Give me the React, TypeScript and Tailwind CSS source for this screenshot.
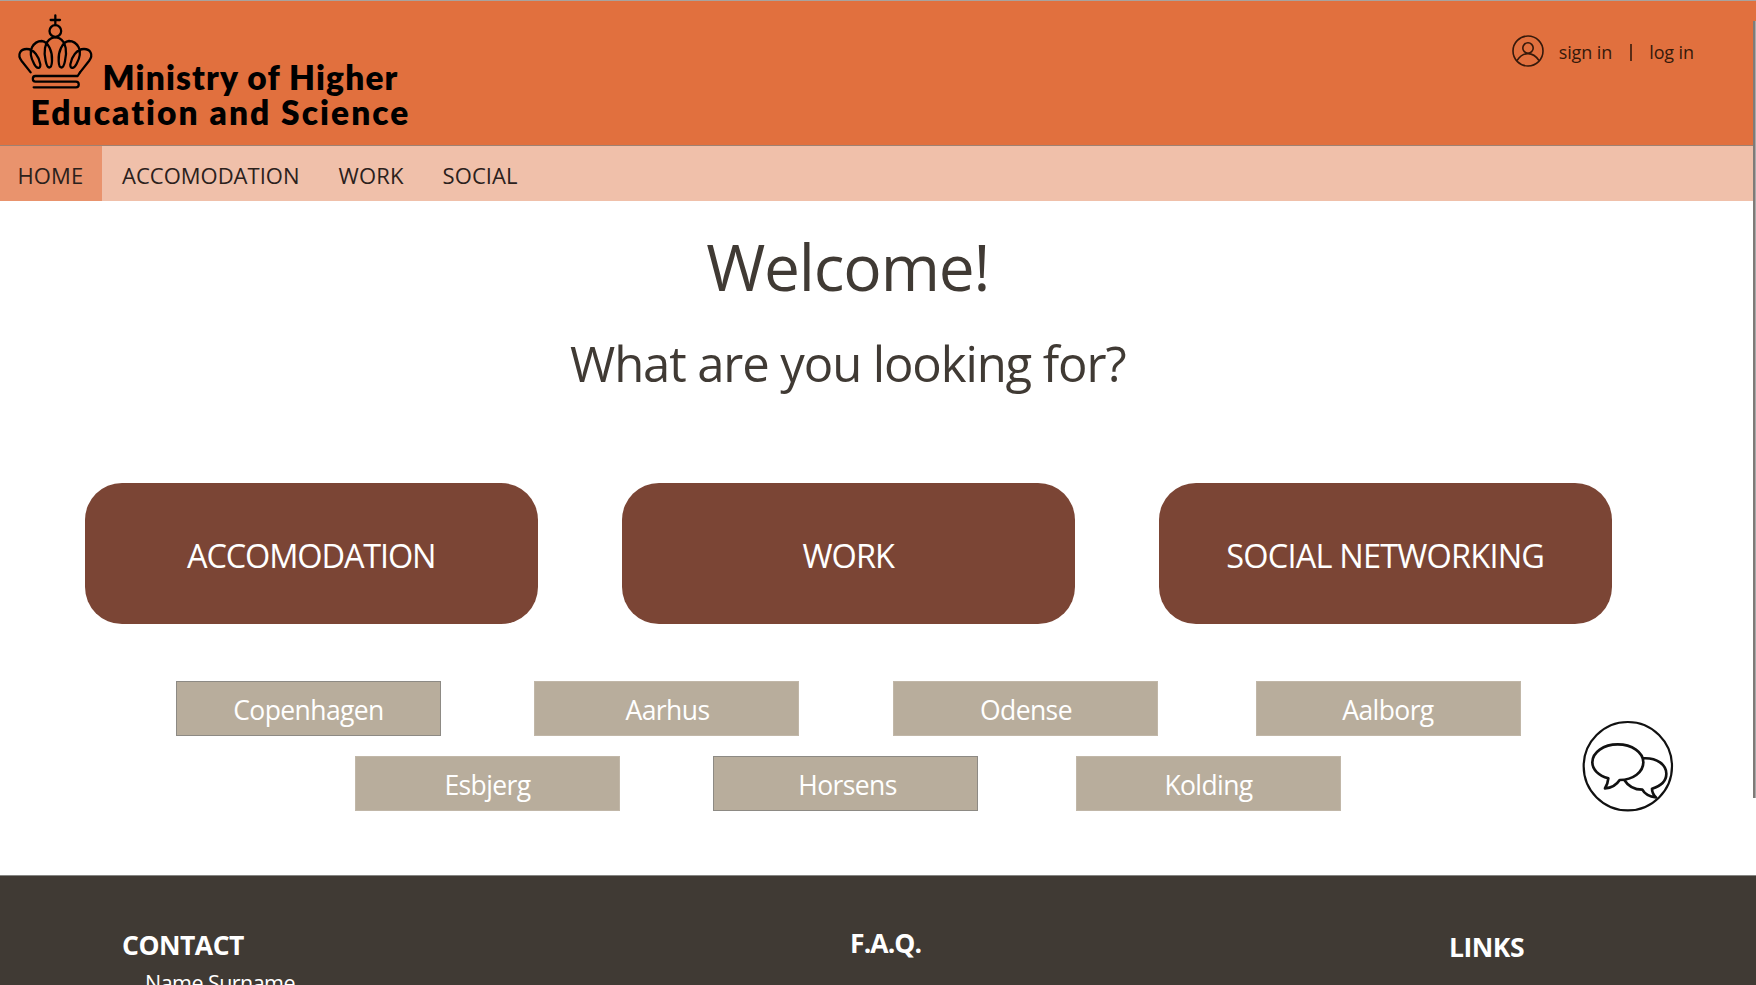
const navItems = [
  { label: 'HOME', box: 'w-[102px] pl-[17.500px] tracking-[0.1px] bg-[#e9936d]' },
  { label: 'ACCOMODATION', box: 'w-[215px] pl-[20px]' },
  { label: 'WORK', box: 'w-[104px] pl-[21.500px] tracking-[0.2px]' },
  { label: 'SOCIAL', box: 'pl-[21.500px] tracking-[0.1px]' },
];

const categories = [
  { label: 'ACCOMODATION', tracking: 'tracking-[-1.150px]' },
  { label: 'WORK', tracking: 'tracking-[-0.9px]' },
  { label: 'SOCIAL NETWORKING', tracking: 'tracking-[-0.8px]' },
];

function CrownIcon() {
  const half =
    'M62 202 L35 168 C20 148 32 132 50 132 C72 132 88 157 91 178 C92 193 80 192 72 176 C62 158 60 140 66 127 C74 112 86 108 95 108 C116 110 128 142 126 168 C125 194 112 194 107 168 C101 143 102 112 124 100 Q130 97 136 97';
  return (
    <svg className="h-[85px] w-[90px] shrink-0" viewBox="0 0 270 255" fill="none" stroke="#000" strokeWidth="6.8" strokeLinecap="round" strokeLinejoin="round">
      <path d="M136 31V60M122 45H150" />
      <circle cx="136" cy="78" r="17.5" />
      <path d={half} />
      <path d={half} transform="translate(272 0) scale(-1 1)" />
      <path d="M210 202L203 213H76C66 213 66 230 76 230H198C209 230 209 247 198 247H71" />
    </svg>
  );
}

function UserIcon() {
  return (
    <svg className="size-8 shrink-0" viewBox="0 0 32 32" fill="none" stroke="#35190b" strokeWidth="1.6">
      <circle cx="16" cy="16" r="15" />
      <circle cx="16" cy="13" r="5.2" />
      <path d="M5 25.5C8 21 12 18.6 16 18.6S24 21 27 25.5" />
    </svg>
  );
}

function ChatIcon() {
  return (
    <svg className="h-[92px] w-[92px]" viewBox="36 28 276 276" fill="#fff" stroke="#111" strokeWidth="8" strokeLinejoin="round">
      <circle cx="173.500" cy="166.500" r="132.500" strokeWidth="6.5" />
      <path d="M218 143C262 140 289 163 289 189C289 210 272 226 246 234C246 243 250 252 258 260C240 258 224 250 217 237C195 237 174 226 163 208" />
      <path d="M143 101C186 101 220 125 220 155C220 184 190 208 149 208C140 222 124 232 105 233C111 224 114 213 115 203C86 195 67 177 67 155C67 125 101 101 143 101Z" />
    </svg>
  );
}

function City({ name, className = 'border-[#c1b7a8]' }: { name: string; className?: string }) {
  return (
    <button
      className={
        'flex h-[55px] w-[265px] items-center justify-center border pt-[4px] text-[26.500px] leading-none tracking-[-0.6px] text-white bg-[#b8ad9c] ' +
        className
      }
    >
      {name}
    </button>
  );
}

export default function App() {
  return (
    <div className="relative flex h-[985px] w-[1756px] flex-col overflow-hidden bg-white font-['Open_Sans','Noto_Sans',sans-serif]">
      <header className="flex h-[146px] shrink-0 justify-between border-y border-t-[#a8a39f] border-b-[#a08171] bg-[#e1703e]">
        <div className="pt-1 font-['Lato',sans-serif] text-[33.500px] font-extrabold leading-[35px] text-black">
          <div className="flex h-[90px] items-end pl-[10px]">
            <div className="self-start">
              <CrownIcon />
            </div>
            <span className="pl-[2.500px] tracking-[1.150px]">Ministry of Higher</span>
          </div>
          <div className="pl-[30.500px] tracking-[2.050px]">Education and Science</div>
        </div>
        <div className="mr-[62px] mt-[34px] flex h-8 items-center text-[18px] leading-none tracking-[-0.1px] text-[#35190b]">
          <UserIcon />
          <a className="pl-[15px] pt-[2px]">sign in</a>
          <span className="mx-[17.500px] mt-[3px] h-[17px] w-[2px] bg-[#5a2c16]" />
          <a className="pt-[2px]">log in</a>
        </div>
      </header>

      <nav className="flex h-[55px] shrink-0 bg-[#f0c0aa] text-[22px] leading-none text-[#2b211c]">
        {navItems.map((n) => (
          <a key={n.label} className={'flex h-full items-center pt-[2px] ' + n.box}>
            {n.label}
          </a>
        ))}
      </nav>

      <main className="flex h-[674px] shrink-0 flex-col pl-[84.500px] text-[#403a34]">
        <div className="flex w-[1527.500px] flex-col">
          <h1 className="mt-[34px] pr-[1px] text-center text-[64px] leading-[64px] tracking-[-1.150px]">Welcome!</h1>
          <h2 className="mt-[40px] pr-[1px] text-center text-[49px] leading-[49px] tracking-[-1.100px]">What are you looking for?</h2>
          <div className="mt-[95px] flex justify-between">
            {categories.map((c) => (
              <button
                key={c.label}
                className={'flex h-[141px] w-[453.500px] items-center justify-center rounded-[37px] bg-[#7b4535] pt-[6px] text-[32.500px] leading-none text-white ' + c.tracking}
              >
                {c.label}
              </button>
            ))}
          </div>
          <div className="mt-[56.500px] flex pl-[91.500px]">
            <City name="Copenhagen" className="border-[#8d8a84]" />
            <div className="flex gap-[93.500px] pl-[93px] pr-[98px]">
              <City name="Aarhus" className="border-[#c1b7a8] pl-[2px]" />
              <City name="Odense" className="border-[#c1b7a8] pl-[2px]" />
            </div>
            <City name="Aalborg" />
          </div>
          <div className="mt-5 flex pl-[270.500px]">
            <City name="Esbjerg" />
            <div className="pl-[93px] pr-[98px]">
              <City name="Horsens" className="border-[#8d8a84] pl-[4px]" />
            </div>
            <City name="Kolding" />
          </div>
        </div>
      </main>

      <footer className="flex h-[110px] shrink-0 border-t border-[#858582] bg-[#403a34] text-white">
        <section className="w-[850px] pl-[122px] pt-[56px]">
          <h3 className="text-[26.500px] font-bold leading-[26px] tracking-[-0.5px]">CONTACT</h3>
          <p className="mt-[13px] pl-[23px] text-[21.500px] leading-6 tracking-[-0.550px]">Name Surname</p>
        </section>
        <section className="w-[598px] pt-[54px]">
          <h3 className="text-[26.500px] font-bold leading-[26px] tracking-[-0.9px]">F.A.Q.</h3>
        </section>
        <section className="pl-[1px] pt-[58px]">
          <h3 className="text-[26.500px] font-bold leading-[26px] tracking-[-0.5px]">LINKS</h3>
        </section>
      </footer>

      <button className="absolute left-[1582px] top-[720px]" aria-label="Chat">
        <ChatIcon />
      </button>
      <div className="absolute right-0 top-[21px] h-[777px] w-[3px] border-r border-[#a9a9a9] bg-[#7f7b78]" />
    </div>
  );
}
